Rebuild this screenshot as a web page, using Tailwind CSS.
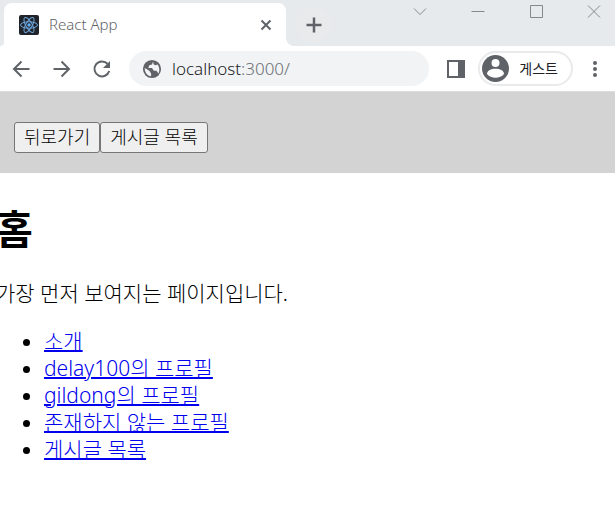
<!DOCTYPE html>
<html lang="ko">
<head>
    <meta charset="UTF-8">
    <meta name="viewport" content="width=device-width, initial-scale=1.0">
    <title>React App</title>
    <script src="https://cdn.jsdelivr.net/npm/@tailwindcss/browser@4"></script>
</head>
<body class="min-h-screen overflow-x-hidden bg-white font-['Noto_Sans','Noto_Sans_CJK_KR',sans-serif] text-black">

    <!-- Tab strip -->
    <div class="flex h-[46px] items-end bg-[#e7eaed]">
        <div class="w-1 bg-white"><div class="h-2 rounded-br-lg bg-[#e7eaed]"></div></div>
        <div class="flex h-[43px] w-[282px] items-center rounded-t-lg bg-white pl-[15px] pr-3">
            <svg class="h-5 w-5 shrink-0" viewBox="0 0 20 20" fill="none">
                <rect width="20" height="20" rx="2" fill="#20232a"/>
                <g stroke="#6fa8dc" stroke-width="1">
                    <ellipse cx="10" cy="10" rx="8.5" ry="3.2"/>
                    <ellipse cx="10" cy="10" rx="8.5" ry="3.2" transform="rotate(60 10 10)"/>
                    <ellipse cx="10" cy="10" rx="8.5" ry="3.2" transform="rotate(120 10 10)"/>
                </g>
                <circle cx="10" cy="10" r="1.7" fill="#61aefb"/>
            </svg>
            <span class="ml-[10px] flex-1 text-[15px] font-light text-[#5f6368]">React App</span>
            <button class="flex h-4 w-4 items-center justify-center" aria-label="탭 닫기">
                <svg class="h-4 w-4" viewBox="0 0 16 16" stroke="#5f6368" stroke-width="2"><path d="M3.5 3.5l9 9M12.5 3.5l-9 9"/></svg>
            </button>
        </div>
        <div class="w-2 bg-white"><div class="h-[43px] rounded-bl-lg bg-[#e7eaed]"></div></div>
        <button class="ml-0.5 mb-1 flex h-[35px] w-[35px] items-center justify-center rounded-full bg-[#e8eaeb]" aria-label="새 탭">
            <svg class="h-4 w-4" viewBox="0 0 16 16" stroke="#5f6368" stroke-width="2.500"><path d="M8 .5v15M.5 8h15"/></svg>
        </button>
        <div class="ml-auto flex gap-11 self-start pr-[14px] pt-1 text-[#85898e]">
            <button aria-label="탭 검색"><svg class="h-4 w-[14px]" viewBox="0 0 14 16" fill="none" stroke="currentColor"><path d="M1 4.5l6 6 6-6"/></svg></button>
            <button aria-label="최소화"><svg class="h-4 w-[14px]" viewBox="0 0 14 16" stroke="currentColor"><path d="M.5 7.5h13"/></svg></button>
            <button aria-label="최대화"><svg class="h-4 w-[14px]" viewBox="0 0 14 16" fill="none" stroke="currentColor"><path d="M1.5 1.5h12v12h-12z"/></svg></button>
            <button aria-label="닫기"><svg class="h-4 w-[14px]" viewBox="0 0 14 16" stroke="currentColor"><path d="M1 1.5l12 12M13 1.5l-12 12"/></svg></button>
        </div>
    </div>

    <!-- Toolbar -->
    <div class="flex h-[45px] items-center pl-3 pr-[10px] text-[#5f6368]">
        <div class="flex gap-5">
            <button aria-label="뒤로"><svg class="h-5 w-5" viewBox="0 0 20 20" fill="none" stroke="currentColor" stroke-width="2"><path d="M17.5 10h-15M9.500 2.500L2 10l7.500 7.500"/></svg></button>
            <button aria-label="앞으로"><svg class="h-5 w-5" viewBox="0 0 20 20" fill="none" stroke="currentColor" stroke-width="2"><path d="M1.500 10h15M9.500 2.500L17 10l-7.500 7.500"/></svg></button>
            <button aria-label="새로고침"><svg class="h-5 w-5" viewBox="0 0 20 20" fill="none"><path d="M15.5 4.800A7.500 7.500 0 1 0 17.200 12" stroke="currentColor" stroke-width="2"/><path d="M18 2v7h-7z" fill="currentColor"/></svg></button>
        </div>
        <div class="ml-[17px] flex h-[35px] min-w-0 flex-1 items-center rounded-full bg-[#f1f3f4] pl-[13px]">
            <svg class="h-5 w-5 shrink-0" viewBox="1 1 22 22">
                <circle cx="12" cy="12" r="10" fill="currentColor"/>
                <path d="M13 4l-1 3-3 1-1 3h4l2 3h3l2 3c2-3 1-8-1-10l-2 1-2-1zM4 11l5 3 2 3v3c-4 0-7-4-7-9z" fill="#f1f3f4"/>
            </svg>
            <div class="ml-[10px] text-[17px] font-light text-[#6b7074]"><span class="text-[#202124]">localhost</span>:3000/</div>
        </div>
        <button class="ml-[17px]" aria-label="측면 패널"><svg class="h-5 w-5" viewBox="0 0 20 20"><path d="M1 1h18v18H1zM3 3v14h9V3z" fill="currentColor" fill-rule="evenodd"/></svg></button>
        <button class="ml-3 flex h-[35px] items-center rounded-full border-2 border-[#e8eaeb] bg-white pl-[2px] pr-[13px] text-[14px] text-[#202124]">
            <svg class="h-[27px] w-[27px]" viewBox="0 0 27 27"><circle cx="13.5" cy="13.5" r="13.5" fill="#5f6368"/><circle cx="13.5" cy="8" r="4" fill="#fff"/><path d="M5 19c0-7 17-7 17 0-4 5-13 5-17 0z" fill="#fff"/></svg>
            <span class="ml-[10px]">게스트</span>
        </button>
        <button class="ml-3" aria-label="메뉴"><svg class="h-5 w-5" viewBox="0 0 20 20" fill="currentColor"><circle cx="10" cy="4" r="2"/><circle cx="10" cy="10" r="2"/><circle cx="10" cy="16" r="2"/></svg></button>
    </div>

    <header class="flex border-t border-[#dadce0] bg-[#d3d3d3] px-[14px] pb-5 pt-[30px] text-[18px] font-light leading-[29px]">
        <button class="rounded-[3px] border border-[#767676] bg-[#efefef] px-[9px]">뒤로가기</button>
        <button class="rounded-[3px] border border-[#767676] bg-[#efefef] px-[9px]">게시글 목록</button>
    </header>

    <main class="-ml-1 pt-[28px] text-[21px] font-light leading-[27px]">
        <h1 class="text-[40px] font-bold leading-[56px]">홈</h1>
        <p class="mt-[23px]">가장 먼저 보여지는 페이지입니다.</p>
        <ul class="mt-[21px] list-disc pl-12 text-[#0000ee] underline decoration-2 marker:text-black">
            <li><a href="/about">소개</a></li>
            <li><a href="/profiles/delay100">delay100의 프로필</a></li>
            <li><a href="/profiles/gildong">gildong의 프로필</a></li>
            <li><a href="/profiles/void">존재하지 않는 프로필</a></li>
            <li><a href="/articles">게시글 목록</a></li>
        </ul>
    </main>

</body>
</html>
